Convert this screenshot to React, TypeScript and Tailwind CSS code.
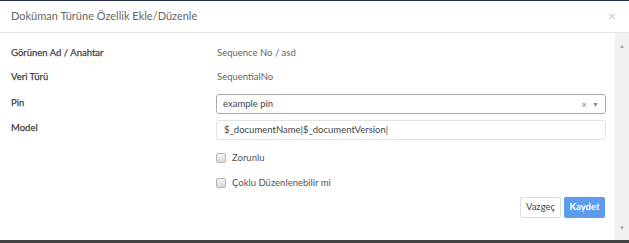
const font = { fontFamily: '"Lato", "Liberation Sans", sans-serif' };

function Checkbox() {
  return (
    <span className="w-[10px] h-[10px] rounded-[2px] border border-[#b5b5b5] bg-gradient-to-b from-[#f4f4f4] to-[#dcdcdc] shrink-0" />
  );
}

const label = 'font-normal text-[#444] [-webkit-text-stroke:0.25px_#444]';

export default function App() {
  return (
    <div className="w-[629px] h-[243px] flex flex-col bg-[#3a3a3a] overflow-hidden" style={font}>
      <div className="h-[1px] bg-[#1f2b47] shrink-0" />
      <div className="flex-1 bg-white flex flex-col min-h-0">
        <div className="h-[32px] shrink-0 border-b border-[#e5e5e5] flex items-center justify-between pl-[11px] pr-[13px]">
          <span className="text-[11px] text-[#666]">Doküman Türüne Özellik Ekle/Düzenle</span>
          <span className="text-[13px] text-[#c8c8c8] leading-none">×</span>
        </div>
        <div className="flex-1 flex min-h-0">
          <div className="flex-1 pl-[11px] pr-[9px] pt-[8px] text-[9.5px]">
            <div className="flex items-center h-[24px]">
              <span className={`w-[206px] ${label}`}>Görünen Ad / Anahtar</span>
              <span className="text-[#666]">Sequence No / asd</span>
            </div>
            <div className="flex items-center h-[24px]">
              <span className={`w-[206px] ${label}`}>Veri Türü</span>
              <span className="text-[#666]">SequentialNo</span>
            </div>
            <div className="flex items-start mt-[5px]">
              <span className={`w-[205px] ${label} leading-[14px] mt-[2px]`}>Pin</span>
              <div className="flex-1 h-[20px] border border-[#aaa] rounded-[3px] flex items-center pl-[6px] pr-[6px] text-[#444]">
                <span className="flex-1">example pin</span>
                <span className="text-[10px] text-[#888] mr-[5px]">×</span>
                <span className="text-[7px] text-[#888]">▼</span>
              </div>
            </div>
            <div className="flex items-start mt-[6px]">
              <span className={`w-[205px] ${label} leading-[14px] mt-[1px]`}>Model</span>
              <div className="flex-1 h-[20px] border border-[#e3e3e3] rounded-[2px] flex items-center pl-[7px] text-[#444]">
                $_documentName|$_documentVersion|
              </div>
            </div>
            <div className="flex items-center h-[20px] mt-[8px] pl-[205px] gap-[6px]">
              <Checkbox />
              <span className="text-[#555]">Zorunlu</span>
            </div>
            <div className="flex items-center h-[20px] mt-[5px] pl-[205px] gap-[6px]">
              <Checkbox />
              <span className="text-[#555]">Çoklu Düzenlenebilir mi</span>
            </div>
            <div className="flex justify-end gap-[3px] mt-[4px] pr-[1px]">
              <button className="h-[21px] w-[41px] border border-[#ddd] rounded-[2px] bg-white text-[9.5px] text-[#444]">
                Vazgeç
              </button>
              <button className="h-[21px] w-[41px] rounded-[2px] bg-[#5d9cec] text-[9.5px] font-bold text-white">
                Kaydet
              </button>
            </div>
          </div>
          <div className="w-[14px] bg-[#f1f1f1] flex flex-col items-center justify-between pt-[10px] pb-[9px] text-[6px] text-[#a3a3a3] leading-none">
            <span>▲</span>
            <span>▼</span>
          </div>
        </div>
      </div>
      <div className="h-[3px] bg-[#444] shrink-0" />
    </div>
  );
}
